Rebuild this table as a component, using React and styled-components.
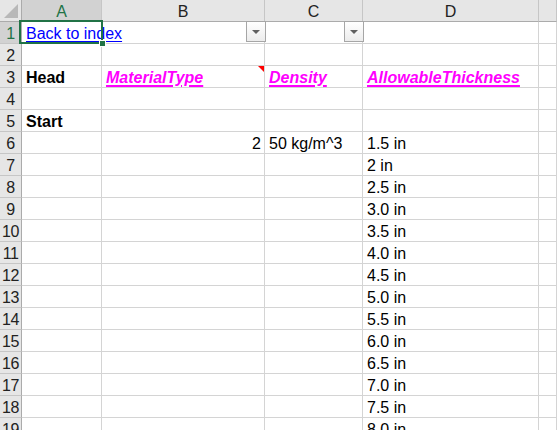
import React from "react";
import styled, { createGlobalStyle } from "styled-components";

const GlobalStyle = createGlobalStyle`
  html, body {
    margin: 0;
    padding: 0;
    background: #ffffff;
    overflow: hidden;
  }
  body {
    font-family: "Liberation Sans", Arial, sans-serif;
  }
`;

const Sheet = styled.div`
  display: grid;
  grid-template-columns: 22px 80px 163px 98px 176px 1fr;
  grid-auto-rows: 22px;
  width: 557px;
  height: 430px;
  overflow: hidden;
  font-size: 16px;
  color: #000;
`;

const Corner = styled.div`
  position: relative;
  background: #e6e6e6;
  border-right: 1px solid #ababab;
  border-bottom: 1px solid #ababab;
  &::after {
    content: "";
    position: absolute;
    right: 3px;
    bottom: 3px;
    width: 0;
    height: 0;
    border-left: 14px solid transparent;
    border-bottom: 14px solid #b8b8b8;
  }
`;

const ColHead = styled.div`
  display: flex;
  align-items: center;
  justify-content: center;
  background: ${(p) => (p.$active ? "#d2d2d2" : "#e6e6e6")};
  color: ${(p) => (p.$active ? "#217346" : "#222")};
  border-right: 1px solid #c6c6c6;
  border-bottom: 1px solid #ababab;
  padding-top: 2px;
`;

const RowHead = styled.div`
  display: flex;
  align-items: center;
  justify-content: center;
  background: ${(p) => (p.$active ? "#d2d2d2" : "#e6e6e6")};
  color: ${(p) => (p.$active ? "#217346" : "#222")};
  border-right: 1px solid #ababab;
  border-bottom: 1px solid #c6c6c6;
  padding-top: 2px;
  white-space: nowrap;
  overflow: hidden;
  letter-spacing: -0.5px;
`;

const Cell = styled.div`
  position: relative;
  display: flex;
  align-items: center;
  justify-content: ${(p) => (p.$right ? "flex-end" : "flex-start")};
  padding: 2px 3px 0 4px;
  border-right: 1px solid #d4d4d4;
  border-bottom: 1px solid #d4d4d4;
  white-space: nowrap;
  overflow: visible;
  z-index: ${(p) => (p.$top ? 2 : 1)};
`;

const Link = styled.a`
  color: #0000ff;
  text-decoration: underline;
  text-underline-offset: 2px;
`;

const Bold = styled.span`
  font-weight: bold;
`;

const Field = styled.span`
  font-weight: bold;
  font-style: italic;
  color: #ff00ff;
  text-decoration: underline;
  text-decoration-thickness: 2px;
  text-underline-offset: 2px;
`;

const Selection = styled.div`
  position: absolute;
  left: -3px;
  top: -2px;
  right: -2px;
  bottom: -1px;
  border: 2px solid #217346;
  pointer-events: none;
  &::after {
    content: "";
    position: absolute;
    right: -5px;
    bottom: -5px;
    width: 5px;
    height: 5px;
    background: #217346;
    border: 1px solid #fff;
  }
`;

const DropButton = styled.div`
  position: absolute;
  right: -2px;
  top: -1px;
  width: 20px;
  height: 21px;
  box-sizing: border-box;
  border: 1px solid #a6a6a6;
  background: linear-gradient(#ffffff, #ececec);
  display: flex;
  align-items: center;
  justify-content: center;
  &::before {
    content: "";
    width: 0;
    height: 0;
    border-left: 4px solid transparent;
    border-right: 4px solid transparent;
    border-top: 4px solid #606060;
  }
`;

const CommentMark = styled.div`
  position: absolute;
  top: 0;
  right: 0;
  width: 0;
  height: 0;
  border-left: 6px solid transparent;
  border-top: 6px solid #ff0000;
`;

const thickness = [
  "1.5 in", "2 in", "2.5 in", "3.0 in", "3.5 in", "4.0 in", "4.5 in",
  "5.0 in", "5.5 in", "6.0 in", "6.5 in", "7.0 in", "7.5 in", "8.0 in",
];

const columns = ["A", "B", "C", "D", ""];

const rowContent = (r) => {
  const cells = [null, null, null, null, null];
  if (r === 1) {
    cells[0] = { el: <Link href="#">Back to index</Link>, sel: true, top: true };
    cells[1] = { el: <DropButton /> };
    cells[2] = { el: <DropButton /> };
  }
  if (r === 3) {
    cells[0] = { el: <Bold>Head</Bold> };
    cells[1] = { el: <><Field>MaterialType</Field><CommentMark /></> };
    cells[2] = { el: <Field>Density</Field> };
    cells[3] = { el: <Field>AllowableThickness</Field> };
  }
  if (r === 5) cells[0] = { el: <Bold>Start</Bold> };
  if (r === 6) {
    cells[1] = { el: "2", right: true };
    cells[2] = { el: "50 kg/m^3" };
  }
  if (r >= 6 && thickness[r - 6]) cells[3] = { el: thickness[r - 6] };
  return cells;
};

export default function App() {
  const rows = Array.from({ length: 19 }, (_, i) => i + 1);
  return (
    <>
      <GlobalStyle />
      <Sheet>
        <Corner />
        {columns.map((c, i) => (
          <ColHead key={i} $active={c === "A"}>{c}</ColHead>
        ))}
        {rows.map((r) => (
          <React.Fragment key={r}>
            <RowHead $active={r === 1}>{r}</RowHead>
            {rowContent(r).map((cell, i) => (
              <Cell key={i} $right={cell && cell.right} $top={cell && cell.top}>
                {cell && cell.el}
                {cell && cell.sel && <Selection />}
              </Cell>
            ))}
          </React.Fragment>
        ))}
      </Sheet>
    </>
  );
}
